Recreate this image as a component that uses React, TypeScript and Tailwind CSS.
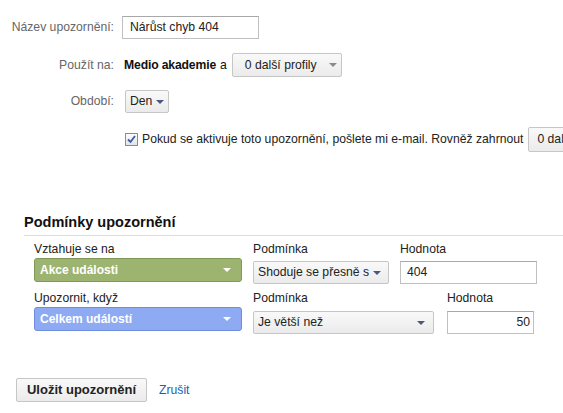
const font = "font-['Liberation_Sans',Arial,sans-serif]";

function Caret({ className }: { className: string }) {
  return (
    <svg width="8" height="4" viewBox="0 0 8 4" className={className} aria-hidden="true">
      <path d="M0 0h8L4 4z" fill="currentColor" />
    </svg>
  );
}

function GrayButton({
  children,
  className,
  caret,
}: {
  children: React.ReactNode;
  className: string;
  caret?: string;
}) {
  return (
    <div
      className={`flex items-center rounded-[2px] border border-[#c6c6c6] bg-[linear-gradient(#f9f9f9,#ebebeb)] text-[12.2px] text-[#222] ${className}`}
    >
      <span className="whitespace-nowrap">{children}</span>
      {caret && <Caret className={caret} />}
    </div>
  );
}

function ColorSelect({ label, color }: { label: string; color: "green" | "blue" }) {
  const tone =
    color === "green"
      ? "border-[#7f9a58] bg-[#9db471]"
      : "border-[#6f8ddd] bg-[#8eaaf2]";
  return (
    <div
      className={`flex h-[24px] w-[208px] items-center justify-between rounded-[3px] border pl-[5px] pr-[10px] text-[12px] font-bold text-white ${tone}`}
    >
      <span>{label}</span>
      <Caret className="text-white" />
    </div>
  );
}

function TextBox({ value, className }: { value: string; className: string }) {
  return (
    <div
      className={`flex h-[23px] items-center border border-[#c0c0c0] border-t-[#a8a8a8] bg-white text-[12.2px] text-[#222] ${className}`}
    >
      {value}
    </div>
  );
}

export default function App() {
  return (
    <div className={`h-[413px] w-[563px] overflow-hidden bg-white ${font}`}>
      {/* alert settings */}
      <div className="pt-[16px]">
        <div className="flex h-[23px] items-center">
          <span className="w-[114px] text-right text-[12.2px] text-[#666]">Název upozornění:</span>
          <TextBox value="Nárůst chyb 404" className="ml-[8px] w-[137px] pl-[7px]" />
        </div>
        <div className="mt-[14px] flex h-[24px] items-center">
          <span className="w-[114px] text-right text-[12.2px] text-[#666]">Použít na:</span>
          <span className="ml-[10px] text-[12.2px] font-bold tracking-[-0.15px] text-[#111]">
            Medio akademie
          </span>
          <span className="ml-[4px] text-[12.2px] text-[#111]">a</span>
          <GrayButton className="ml-[5px] h-[24px] w-[110px] pl-[12px]" caret="ml-[12px] text-[#8a8a8a]">
            0 další profily
          </GrayButton>
        </div>
        <div className="mt-[13px] flex h-[23px] items-center">
          <span className="w-[114px] text-right text-[12.2px] text-[#666]">Období:</span>
          <GrayButton className="ml-[11px] h-[23px] w-[44px] pl-[4px]" caret="ml-[4px] text-[#4a587a]">
            Den
          </GrayButton>
        </div>
        <div className="mt-[14px] flex h-[25px] items-center whitespace-nowrap">
          <span className="ml-[125px] flex size-[13px] shrink-0 items-center justify-center border border-[#8c8c8c] bg-[linear-gradient(#fdfdfd,#e4e4e4)]">
            <svg width="9" height="9" viewBox="0 0 9 9" aria-hidden="true">
              <path d="M1 4.5 3.5 7 8 1" fill="none" stroke="#3a5aa8" strokeWidth="1.8" />
            </svg>
          </span>
          <span className="ml-[4px] text-[12.2px] text-[#222]">
            Pokud se aktivuje toto upozornění, pošlete mi e-mail. Rovněž zahrnout
          </span>
          <GrayButton className="ml-[5px] h-[25px] w-[60px] shrink-0 pl-[8px]">0 další</GrayButton>
        </div>
      </div>

      {/* conditions */}
      <div className="ml-[24px] mt-[61px]">
        <h2 className="border-b border-[#dcdcdc] pb-[4px] text-[14.5px] font-bold leading-[18px] text-[#111]">
          Podmínky upozornění
        </h2>
        <div className="ml-[10px] mt-[5px] flex">
          <div className="flex flex-col">
            <span className="text-[12.2px] leading-[16px] text-[#222]">Vztahuje se na</span>
            <div className="mt-[1px]">
              <ColorSelect label="Akce události" color="green" />
            </div>
          </div>
          <div className="ml-[11px] flex flex-col">
            <span className="text-[12.2px] leading-[16px] text-[#222]">Podmínka</span>
            <GrayButton className="mt-[4px] h-[23px] w-[136px] pl-[4px]" caret="ml-[4px] text-[#4a587a]">
              Shoduje se přesně s
            </GrayButton>
          </div>
          <div className="ml-[11px] flex flex-col">
            <span className="text-[12.2px] leading-[16px] text-[#222]">Hodnota</span>
            <TextBox value="404" className="mt-[4px] w-[137px] pl-[6px]" />
          </div>
        </div>
        <div className="ml-[10px] mt-[6px] flex">
          <div className="flex flex-col">
            <span className="text-[12.2px] leading-[16px] text-[#222]">Upozornit, když</span>
            <div className="mt-[1px]">
              <ColorSelect label="Celkem událostí" color="blue" />
            </div>
          </div>
          <div className="ml-[11px] flex flex-col">
            <span className="text-[12.2px] leading-[16px] text-[#222]">Podmínka</span>
            <GrayButton
              className="mt-[5px] h-[23px] w-[181px] justify-between pl-[4px] pr-[8px]"
              caret="text-[#4a587a]"
            >
              Je větší než
            </GrayButton>
          </div>
          <div className="ml-[13px] flex flex-col">
            <span className="text-[12.2px] leading-[16px] text-[#222]">Hodnota</span>
            <TextBox value="50" className="mt-[5px] w-[87px] justify-end pr-[3px]" />
          </div>
        </div>
      </div>

      {/* actions */}
      <div className="ml-[16px] mt-[44px] flex items-center">
        <GrayButton className="h-[24px] w-[131px] justify-center text-[13px] font-bold">
          Uložit upozornění
        </GrayButton>
        <span className="ml-[12px] text-[12.2px] text-[#1a5fb4]">Zrušit</span>
      </div>
    </div>
  );
}
